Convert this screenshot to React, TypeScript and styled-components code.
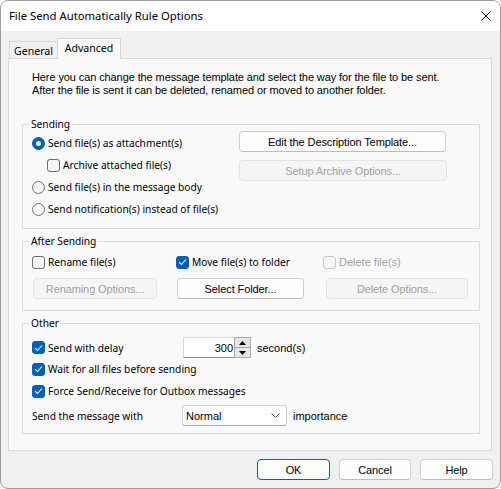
import React from 'react';
import styled, { createGlobalStyle, css } from 'styled-components';

const SEGOE = `"Noto Sans", "Open Sans", sans-serif`;
const MSS = `"Liberation Sans", Arial, sans-serif`;

const GlobalStyle = createGlobalStyle`
  html, body { margin: 0; padding: 0; background: #ffffff; }
  *, *::before, *::after { box-sizing: border-box; }
  #root { width: 501px; height: 489px; }
`;

const Window = styled.div`
  width: 501px;
  height: 489px;
  border: 1px solid #9c9c9c;
  border-radius: 8px;
  background: #f0f0f0;
  overflow: hidden;
  display: flex;
  flex-direction: column;
  font-family: ${MSS};
  color: #000;
`;

const TitleBar = styled.div`
  flex: none;
  height: 30px;
  background: #ffffff;
  display: flex;
  align-items: center;
  justify-content: space-between;
  padding: 0 9px 0 8px;
`;

const TitleText = styled.span`
  font-family: ${SEGOE};
  font-size: 11.3px;
  line-height: 14px;
`;

const CloseBtn = styled.span`
  display: flex;
  width: 10px;
  height: 10px;
`;

const Body = styled.div`
  flex: 1;
  display: flex;
  flex-direction: column;
  padding: 7px 0 0 7px;
`;

const TabStrip = styled.div`
  display: flex;
  align-items: flex-end;
  height: 20px;
  padding-left: 1px;
  position: relative;
  z-index: 1;
`;

const Tab = styled.div<{ $active?: boolean }>`
  font-family: ${SEGOE};
  font-size: 10.6px;
  border: 1px solid #d9d9d9;
  border-bottom: none;
  display: flex;
  align-items: center;
  justify-content: center;
  ${(p) =>
    p.$active
      ? css`
          height: 21px;
          margin-bottom: -1px;
          width: 64px;
          background: #f9f9f9;
          padding-bottom: 2px;
        `
      : css`
          height: 17px;
          width: 48px;
          background: #f0f0f0;
          border-right: none;
          padding-top: 1px;
        `}
`;

const Panel = styled.div`
  width: 484px;
  height: 393px;
  border: 1px solid #d9d9d9;
  background: #f9f9f9;
  padding: 12px 11px 0 13px;
  display: flex;
  flex-direction: column;
`;

const Intro = styled.div`
  margin-left: 10px;
  font-size: 11px;
  line-height: 13px;
  letter-spacing: -0.1px;
`;

const Group = styled.fieldset<{ $top: number; $pb: number }>`
  margin: ${(p) => p.$top}px 0 0 0;
  border: 1px solid #dcdcdc;
  padding: 0 9px ${(p) => p.$pb}px 9px;
  min-width: 0;
  width: 458px;
`;

const Legend = styled.legend`
  font-family: ${SEGOE};
  font-size: 10.2px;
  line-height: 14px;
  padding: 0 2px;
  margin-left: -3px;
`;

const SendingGrid = styled.div`
  display: grid;
  grid-template-columns: 207px 1fr;
`;

const Column = styled.div<{ $gap?: number; $pt?: number }>`
  display: flex;
  flex-direction: column;
  gap: ${(p) => p.$gap ?? 0}px;
  padding-top: ${(p) => p.$pt ?? 0}px;
`;

const Row = styled.div<{ $h?: number; $indent?: number; $mt?: number }>`
  display: flex;
  align-items: center;
  height: ${(p) => p.$h ?? 22}px;
  padding-left: ${(p) => p.$indent ?? 0}px;
  margin-top: ${(p) => p.$mt ?? 0}px;
`;

const Label = styled.label<{ $disabled?: boolean; $font?: 'ui' | 'mss'; $w?: number }>`
  display: flex;
  align-items: center;
  gap: 3px;
  font-family: ${(p) => (p.$font === 'mss' ? MSS : SEGOE)};
  font-size: ${(p) => (p.$font === 'mss' ? 11 : 10.2)}px;
  color: ${(p) => (p.$disabled ? '#a0a0a0' : '#000')};
  white-space: nowrap;
  ${(p) => p.$w && css`width: ${p.$w}px; flex: none;`}
`;

const Text = styled.span<{ $font?: 'ui' | 'mss'; $ml?: number; $w?: number }>`
  font-family: ${(p) => (p.$font === 'mss' ? MSS : SEGOE)};
  font-size: ${(p) => (p.$font === 'mss' ? 11 : 10.2)}px;
  margin-left: ${(p) => p.$ml ?? 0}px;
  white-space: nowrap;
  ${(p) => p.$w && css`width: ${p.$w}px; flex: none;`}
`;

const CheckBox = styled.span<{ $checked?: boolean; $disabled?: boolean }>`
  flex: none;
  width: 13px;
  height: 13px;
  border-radius: 3px;
  display: flex;
  align-items: center;
  justify-content: center;
  ${(p) =>
    p.$checked
      ? css`
          background: #005fb8;
          border: 1px solid #005fb8;
        `
      : css`
          background: #f6f6f6;
          border: 1px solid ${p.$disabled ? '#c8c8c8' : '#6e6e6e'};
        `}
`;

const Radio = styled.span<{ $checked?: boolean }>`
  flex: none;
  width: 13px;
  height: 13px;
  border-radius: 50%;
  position: relative;
  ${(p) =>
    p.$checked
      ? css`
          background: #005fb8;
          border: 1px solid #005fb8;
          &::after {
            content: '';
            position: absolute;
            left: 3px;
            top: 3px;
            width: 5px;
            height: 5px;
            border-radius: 50%;
            background: #fff;
          }
        `
      : css`
          background: #f6f6f6;
          border: 1px solid #6e6e6e;
        `}
`;

const Button = styled.button<{ $w: number; $ml?: number; $default?: boolean }>`
  width: ${(p) => p.$w}px;
  height: 21px;
  margin: 0 0 0 ${(p) => p.$ml ?? 0}px;
  padding: 0;
  font-family: ${MSS};
  font-size: 11px;
  letter-spacing: -0.1px;
  color: #000;
  background: #fdfdfd;
  border: 1px solid #d0d0d0;
  border-bottom-color: #bcbcbc;
  border-radius: 4px;
  ${(p) =>
    p.$default &&
    css`
      border: 1px solid #005fb8;
      box-shadow: inset 0 0 0 1px #ffffff;
    `}
  &:disabled {
    color: #a0a0a0;
    background: #f5f5f5;
    border: 1px solid #e5e5e5;
  }
`;

const AfterGrid = styled.div`
  display: grid;
  grid-template-columns: 144px 147px 1fr;
`;

const SpinWrap = styled.div`
  display: flex;
  flex: none;
  height: 21px;
`;

const SpinInput = styled.div`
  width: 51px;
  height: 21px;
  background: #ffffff;
  border: 1px solid #d6d6d6;
  border-right: none;
  border-bottom-color: #8c8c8c;
  display: flex;
  align-items: center;
  justify-content: flex-end;
  padding-right: 1px;
  font-family: ${MSS};
  font-size: 11px;
`;

const SpinButtons = styled.div`
  width: 17px;
  height: 21px;
  display: flex;
  flex-direction: column;
  border: 1px solid #a8a8a8;
  background: #e6e6e6;
`;

const SpinHalf = styled.span<{ $top?: boolean }>`
  flex: 1;
  display: flex;
  align-items: center;
  justify-content: center;
  ${(p) => p.$top && css`border-bottom: 1px solid #a8a8a8;`}
`;

const Select = styled.div`
  flex: none;
  width: 105px;
  height: 21px;
  background: #ffffff;
  border: 1px solid #cfcfcf;
  border-bottom-color: #a8a8a8;
  border-radius: 3px;
  display: flex;
  align-items: center;
  justify-content: space-between;
  padding: 0 6px 0 3px;
  font-family: ${MSS};
  font-size: 11px;
`;

const Footer = styled.div`
  display: flex;
  justify-content: flex-end;
  gap: 9px;
  padding: 8px 7px 0 0;
`;

const Check = () => (
  <svg width="9" height="8" viewBox="0 0 9 8">
    <path d="M1 4.2 L3.4 6.5 L8 1.5" fill="none" stroke="#fff" strokeWidth="1.1" />
  </svg>
);

const CB = ({ checked, disabled }: { checked?: boolean; disabled?: boolean }) => (
  <CheckBox $checked={checked} $disabled={disabled}>
    {checked && <Check />}
  </CheckBox>
);

export default function App() {
  return (
    <>
      <GlobalStyle />
      <Window>
        <TitleBar>
          <TitleText>File Send Automatically Rule Options</TitleText>
          <CloseBtn>
            <svg width="10" height="10" viewBox="0 0 10 10">
              <path d="M0.5 0.5 L9.5 9.5 M9.5 0.5 L0.5 9.5" stroke="#000" strokeWidth="1" />
            </svg>
          </CloseBtn>
        </TitleBar>
        <Body>
          <TabStrip>
            <Tab>General</Tab>
            <Tab $active>Advanced</Tab>
          </TabStrip>
          <Panel>
            <Intro>
              Here you can change the message template and select the way for the file to be sent.
              <br />
              After the file is sent it can be deleted, renamed or moved to another folder.
            </Intro>

            <Group $top={20} $pb={8}>
              <Legend>Sending</Legend>
              <SendingGrid>
                <Column $pt={1}>
                  <Row>
                    <Label>
                      <Radio $checked />
                      Send file(s) as attachment(s)
                    </Label>
                  </Row>
                  <Row $indent={15}>
                    <Label>
                      <CB />
                      Archive attached file(s)
                    </Label>
                  </Row>
                  <Row>
                    <Label>
                      <Radio />
                      Send file(s) in the message body
                    </Label>
                  </Row>
                  <Row>
                    <Label>
                      <Radio />
                      Send notification(s) instead of file(s)
                    </Label>
                  </Row>
                </Column>
                <Column $gap={8}>
                  <Button $w={207}>Edit the Description Template...</Button>
                  <Button $w={208} disabled>
                    Setup Archive Options...
                  </Button>
                </Column>
              </SendingGrid>
            </Group>

            <Group $top={5} $pb={11}>
              <Legend>After Sending</Legend>
              <AfterGrid>
                <Row $mt={3}>
                  <Label>
                    <CB />
                    Rename file(s)
                  </Label>
                </Row>
                <Row $mt={3}>
                  <Label>
                    <CB checked />
                    Move file(s) to folder
                  </Label>
                </Row>
                <Row $mt={3}>
                  <Label $disabled $font="mss">
                    <CB disabled />
                    Delete file(s)
                  </Label>
                </Row>
                <Row $h={21} $mt={5}>
                  <Button $w={124} $ml={1} disabled>
                    Renaming Options...
                  </Button>
                </Row>
                <Row $h={21} $mt={5}>
                  <Button $w={127} $ml={1}>
                    Select Folder...
                  </Button>
                </Row>
                <Row $h={21} $mt={5}>
                  <Button $w={142} $ml={3} disabled>
                    Delete Options...
                  </Button>
                </Row>
              </AfterGrid>
            </Group>

            <Group $top={5} $pb={7}>
              <Legend>Other</Legend>
              <Column $pt={7}>
                <Row $h={21}>
                  <Label $w={151}>
                    <CB checked />
                    Send with delay
                  </Label>
                  <SpinWrap>
                    <SpinInput>300</SpinInput>
                    <SpinButtons>
                      <SpinHalf $top>
                        <svg width="7" height="4" viewBox="0 0 7 4">
                          <path d="M0 4 L3.5 0 L7 4 Z" fill="#000" />
                        </svg>
                      </SpinHalf>
                      <SpinHalf>
                        <svg width="7" height="4" viewBox="0 0 7 4">
                          <path d="M0 0 L3.5 4 L7 0 Z" fill="#000" />
                        </svg>
                      </SpinHalf>
                    </SpinButtons>
                  </SpinWrap>
                  <Text $font="mss" $ml={6}>
                    second(s)
                  </Text>
                </Row>
                <Row>
                  <Label>
                    <CB checked />
                    Wait for all files before sending
                  </Label>
                </Row>
                <Row>
                  <Label>
                    <CB checked />
                    Force Send/Receive for Outbox messages
                  </Label>
                </Row>
                <Row $h={21} $mt={3}>
                  <Text $w={150}>Send the message with</Text>
                  <Select>
                    <span>Normal</span>
                    <svg width="9" height="5" viewBox="0 0 9 5">
                      <path d="M0.5 0.5 L4.5 4.5 L8.5 0.5" fill="none" stroke="#555" strokeWidth="1" />
                    </svg>
                  </Select>
                  <Text $font="mss" $ml={6}>
                    importance
                  </Text>
                </Row>
              </Column>
            </Group>
          </Panel>
          <Footer>
            <Button $w={73} $default>
              OK
            </Button>
            <Button $w={72}>Cancel</Button>
            <Button $w={73}>Help</Button>
          </Footer>
        </Body>
      </Window>
    </>
  );
}
